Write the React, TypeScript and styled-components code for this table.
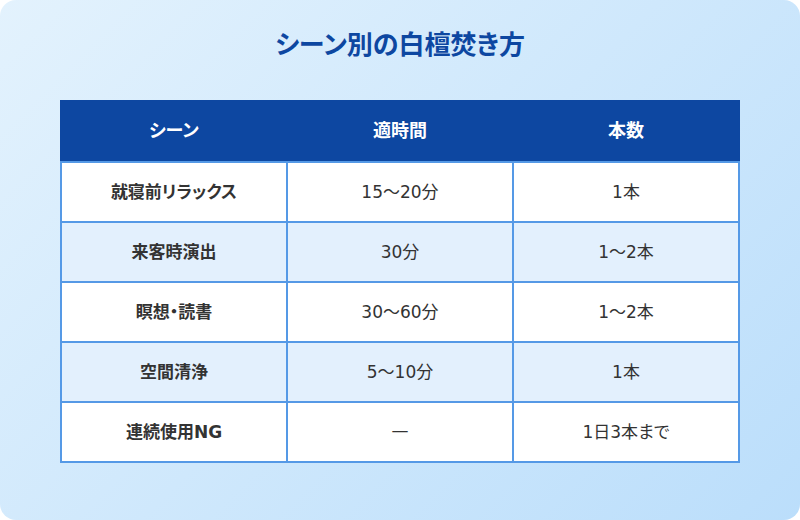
import styled, { createGlobalStyle } from 'styled-components';

const GlobalStyle = createGlobalStyle`
  html, body {
    margin: 0;
    padding: 0;
    background: #ffffff;
  }
  body {
    font-family: "DejaVu Sans", "Noto Sans CJK JP", sans-serif;
    font-feature-settings: "palt";
  }
`;

const Card = styled.div`
  width: 800px;
  height: 520px;
  box-sizing: border-box;
  border-radius: 16px;
  background: linear-gradient(135deg, #e3f2fd 0%, #bbdefb 100%);
  padding: 27px 60px 0;
  display: flex;
  flex-direction: column;
  align-items: center;
`;

const Title = styled.h1`
  margin: 0 0 37px;
  font-size: 26px;
  line-height: 36px;
  font-weight: 700;
  color: #0d47a1;
`;

const Table = styled.table`
  width: 100%;
  border-collapse: collapse;
  table-layout: fixed;
`;

const HeadCell = styled.th`
  height: 61px;
  padding: 0 0 5px;
  box-sizing: border-box;
  background: #0d47a1;
  color: #ffffff;
  font-size: 18px;
  font-weight: 700;
  text-align: center;
  border: 2px solid #0d47a1;
  border-bottom-color: #5599e6;
`;

const Row = styled.tr<{ $striped: boolean }>`
  background: ${({ $striped }) => ($striped ? '#e3f0fd' : '#ffffff')};
`;

const Cell = styled.td<{ $bold?: boolean }>`
  height: 60px;
  padding: 0 0 4px;
  box-sizing: border-box;
  text-align: center;
  font-size: 17px;
  color: #333333;
  font-weight: ${({ $bold }) => ($bold ? 700 : 400)};
  border: 2px solid #5599e6;
`;

const rows = [
  ['就寝前リラックス', '15〜20分', '1本'],
  ['来客時演出', '30分', '1〜2本'],
  ['瞑想・読書', '30〜60分', '1〜2本'],
  ['空間清浄', '5〜10分', '1本'],
  ['連続使用NG', '—', '1日3本まで'],
];

export default function App() {
  return (
    <>
      <GlobalStyle />
      <Card>
        <Title>シーン別の白檀焚き方</Title>
        <Table>
          <thead>
            <tr>
              <HeadCell>シーン</HeadCell>
              <HeadCell>適時間</HeadCell>
              <HeadCell>本数</HeadCell>
            </tr>
          </thead>
          <tbody>
            {rows.map((row, i) => (
              <Row key={row[0]} $striped={i % 2 === 1}>
                <Cell $bold>{row[0]}</Cell>
                <Cell>{row[1]}</Cell>
                <Cell>{row[2]}</Cell>
              </Row>
            ))}
          </tbody>
        </Table>
      </Card>
    </>
  );
}
